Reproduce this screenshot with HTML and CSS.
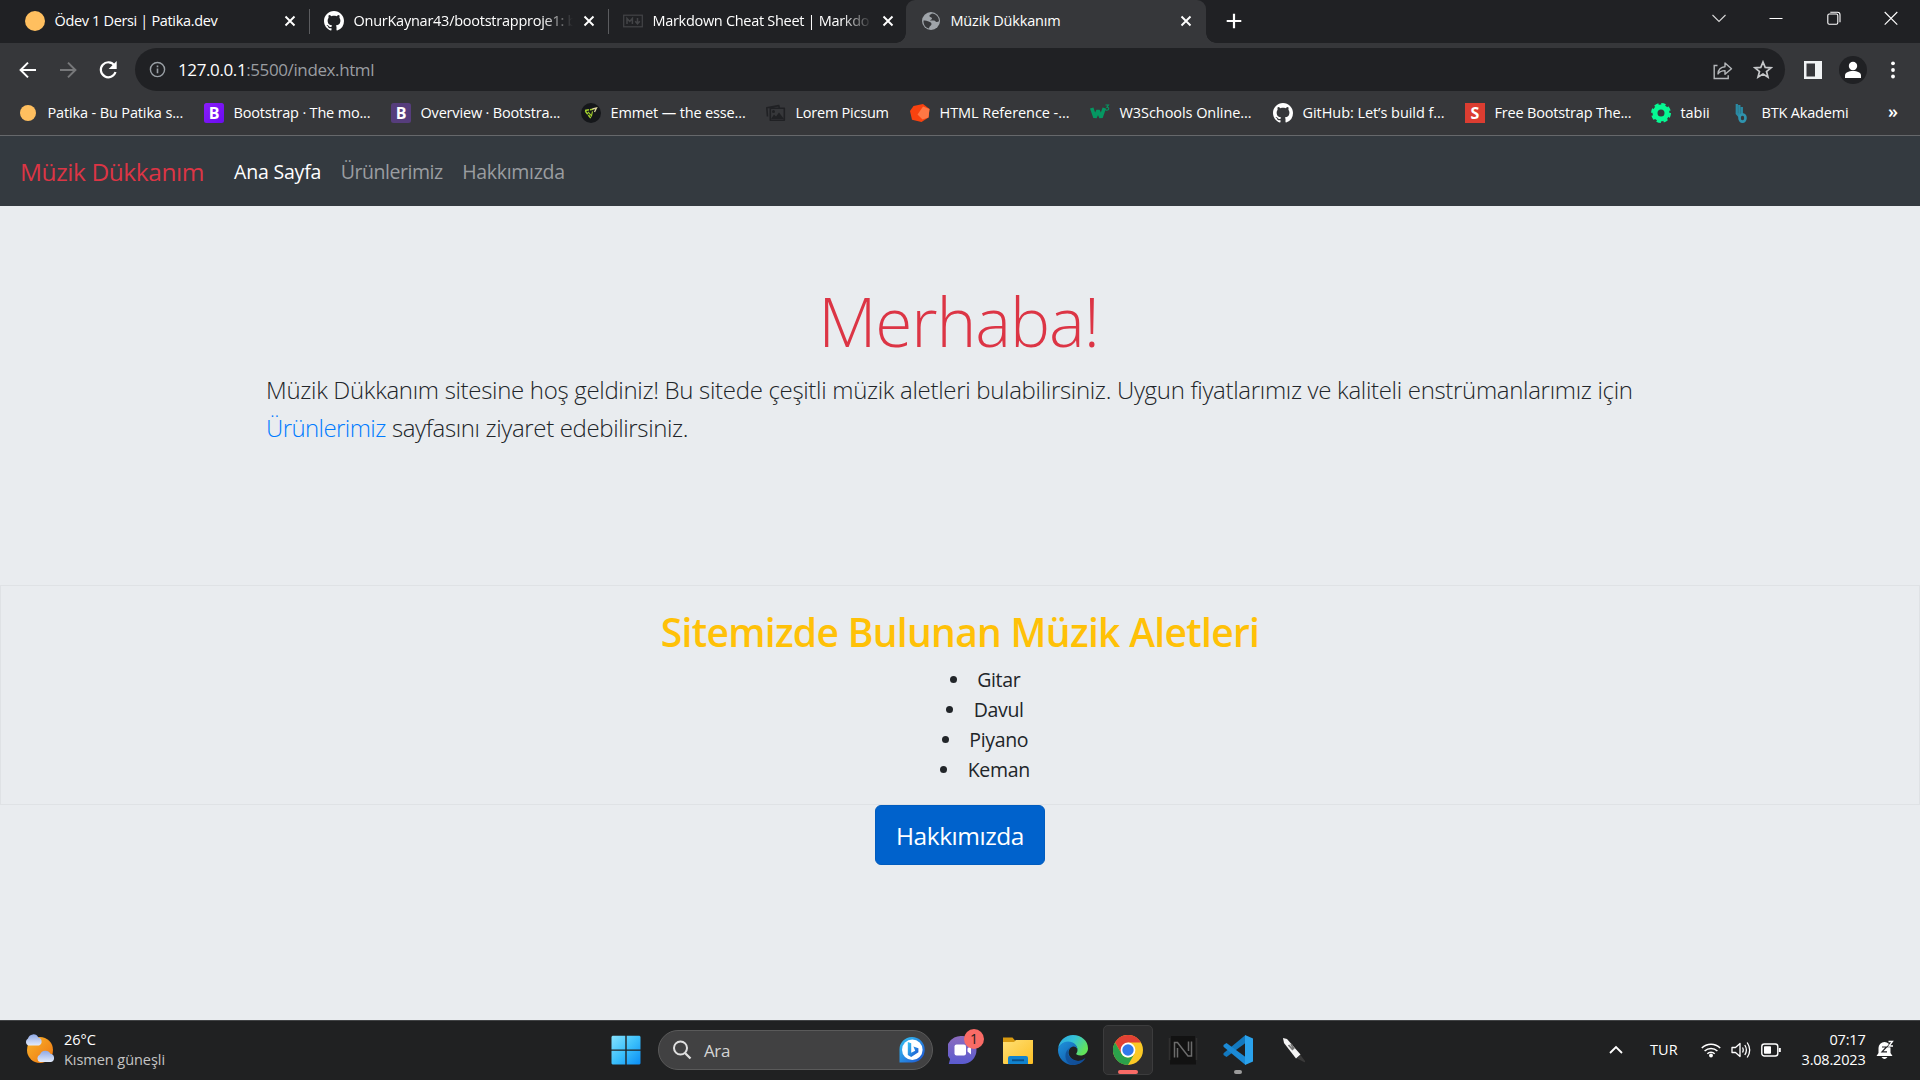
FILE: index.html
```html
<!DOCTYPE html>
<html lang="tr">
<head>
<meta charset="utf-8">
<title>Müzik Dükkanım</title>
<link rel="stylesheet" href="styles.css">
</head>
<body>
<svg width="0" height="0" class="defs">
  <defs>
    <symbol id="github" viewBox="0 0 16 16"><path fill="#fff" d="M8 0C3.58 0 0 3.58 0 8c0 3.54 2.29 6.53 5.47 7.59.4.07.55-.17.55-.38 0-.19-.01-.82-.01-1.49-2.01.37-2.53-.49-2.69-.94-.09-.23-.48-.94-.82-1.13-.28-.15-.68-.52-.01-.53.63-.01 1.08.58 1.23.82.72 1.21 1.87.87 2.33.66.07-.52.28-.87.51-1.07-1.78-.2-3.64-.89-3.64-3.95 0-.87.31-1.59.82-2.15-.08-.2-.36-1.02.08-2.12 0 0 .67-.21 2.2.82.64-.18 1.32-.27 2-.27s1.36.09 2 .27c1.53-1.04 2.2-.82 2.2-.82.44 1.1.16 1.92.08 2.12.51.56.82 1.27.82 2.15 0 3.07-1.87 3.75-3.65 3.95.29.25.54.73.54 1.48 0 1.07-.01 1.93-.01 2.2 0 .21.15.46.55.38A8.01 8.01 0 0 0 16 8c0-4.42-3.58-8-8-8z"/></symbol>
    <symbol id="close" viewBox="0 0 12 12"><path d="M1.500 1.500l9 9M10.500 1.500l-9 9" stroke="#fff" stroke-width="1.900" fill="none"/></symbol>
    <linearGradient id="win" x1="0" y1="0" x2="1" y2="1"><stop offset="0" stop-color="#86e2fd"/><stop offset=".5" stop-color="#3cc0fb"/><stop offset="1" stop-color="#0a8df5"/></linearGradient>
    <linearGradient id="sun" x1="0" y1="0" x2="1" y2="1"><stop offset="0" stop-color="#f9b52c"/><stop offset="1" stop-color="#ee7410"/></linearGradient>
    <linearGradient id="cloud" x1="0" y1="0" x2="0" y2="1"><stop offset="0" stop-color="#8fa9e6"/><stop offset="1" stop-color="#e3ebfb"/></linearGradient>
    <linearGradient id="chat" x1="0" y1="0" x2="0" y2="1"><stop offset="0" stop-color="#8c6bbd"/><stop offset="1" stop-color="#5a5bd0"/></linearGradient>
    <linearGradient id="folder" x1="0" y1="0" x2="1" y2="1"><stop offset="0" stop-color="#ffdf74"/><stop offset="1" stop-color="#fcbf24"/></linearGradient>
    <linearGradient id="edgetop" x1="0" y1="0" x2="1" y2=".5"><stop offset="0" stop-color="#2aa5e0"/><stop offset=".5" stop-color="#35c2d8"/><stop offset="1" stop-color="#62e35a"/></linearGradient>
    <linearGradient id="edgelow" x1="0" y1="0" x2="1" y2="1"><stop offset="0" stop-color="#1f93dc"/><stop offset="1" stop-color="#0d4a9c"/></linearGradient>
    <linearGradient id="bing" x1="0" y1="0" x2="1" y2="1"><stop offset="0" stop-color="#35c3f3"/><stop offset="1" stop-color="#1b50d0"/></linearGradient>
    <linearGradient id="boot" x1="0" y1="0" x2="1" y2="1"><stop offset="0" stop-color="#8a1cfb"/><stop offset="1" stop-color="#6a0cf0"/></linearGradient>
  </defs>
</svg>

<header class="browser">
  <div class="tabstrip">
    <div class="tab tab-patika">
      <svg class="fav" viewBox="0 0 20 20"><circle cx="10" cy="10" r="10" fill="#ffbf5f"/></svg>
      <span class="tab-title">Ödev 1 Dersi | Patika.dev</span>
      <svg class="x"><use href="#close"/></svg>
    </div>
    <div class="tab tab-github">
      <svg class="fav"><use href="#github"/></svg>
      <span class="tab-title fade">OnurKaynar43/bootstrapproje1: b</span>
      <svg class="x"><use href="#close"/></svg>
    </div>
    <div class="tab tab-markdown">
      <svg class="fav" viewBox="0 0 20 20"><rect x=".7" y="4.200" width="18.600" height="11.600" fill="none" stroke="#434447" stroke-width="1.200"/><path d="M4 13V7.500l2.700 3 2.700-3V13M14.500 7v5M12.200 10.300l2.300 2.500 2.300-2.500" fill="none" stroke="#434447" stroke-width="1.500"/></svg>
      <span class="tab-title fade">Markdown Cheat Sheet | Markdo</span>
      <svg class="x"><use href="#close"/></svg>
    </div>
    <div class="tab tab-active">
      <svg class="fav" viewBox="0 0 20 20"><circle cx="10" cy="10" r="9" fill="#9fa4a9"/><path d="M11 2.500c-1.500 1-2.800 1.300-2.500 2.800.3 1.300 2.500.700 2.500 2.200 0 1.300-1.500 1-2 2h4c1.500 0 1.500 2 3 1.500l2-.8c0-4-2.800-7.300-7-7.700zM2.500 9.500c1.500 0 3-.2 4.500.8s3.500.8 3.500 2.700c0 1.600-2 1.700-2.500 4.500-3.700-.9-5.700-4-5.500-8z" fill="#36373a"/></svg>
      <span class="tab-title">Müzik Dükkanım</span>
      <svg class="x"><use href="#close"/></svg>
    </div>
    <svg class="newtab" viewBox="0 0 16 16"><path d="M8 .7v14.600M.7 8h14.600" stroke="#fff" stroke-width="2.200"/></svg>
    <div class="controls">
      <svg viewBox="0 0 16 16"><path d="M1.500 5l6.500 6.500L14.500 5" fill="none" stroke="#d8d8d8" stroke-width="1.100"/></svg>
      <svg viewBox="0 0 16 16"><path d="M1.500 8.500h13" stroke="#fff" stroke-width="1"/></svg>
      <svg viewBox="0 0 16 16"><rect x="1.800" y="4" width="10" height="10.300" rx="1.500" fill="none" stroke="#fff" stroke-width="1.100"/><path d="M4.300 2.200h7.200a2.500 2.500 0 0 1 2.500 2.500v7.500" fill="none" stroke="#fff" stroke-width="1.100"/></svg>
      <svg viewBox="0 0 16 16"><path d="M1.700 2l12.600 12.600M14.300 2L1.700 14.600" stroke="#fff" stroke-width="1.100"/></svg>
    </div>
  </div>

  <div class="toolbar">
    <svg class="nav-ico" viewBox="0 0 20 20"><path d="M18 10H3M10 2.600L2.600 10l7.400 7.400" fill="none" stroke="#fff" stroke-width="2"/></svg>
    <svg class="nav-ico" viewBox="0 0 20 20"><path d="M2 10h15M10 2.600l7.400 7.400-7.400 7.400" fill="none" stroke="#77787a" stroke-width="2"/></svg>
    <svg class="nav-ico" viewBox="0 0 20 20"><path d="M16.500 5.500A7.500 7.500 0 1 0 17.500 12" fill="none" stroke="#fff" stroke-width="2.200"/><path d="M18.700 1v8h-8z" fill="#fff"/></svg>
    <div class="omnibox">
      <svg class="info" viewBox="0 0 18 18"><circle cx="9" cy="9" r="7.500" fill="none" stroke="#9aa0a6" stroke-width="1.500"/><path d="M9 8v5M9 4.800v1.700" stroke="#9aa0a6" stroke-width="1.700"/></svg>
      <span class="url"><b>127.0.0.1</b>:5500/index.html</span>
      <svg class="share" viewBox="0 0 20 20"><path d="M4.500 5.500H1.200v13h14v-3.300" fill="none" stroke="#b4b7ba" stroke-width="1.400"/><path d="M5 14c.3-4.500 3-7 7-7.200V3l6.500 5.700-6.500 5.500v-3.600c-3.300 0-5.500 1-7 3.400z" fill="none" stroke="#b4b7ba" stroke-width="1.400" stroke-linejoin="round"/></svg>
      <svg class="star" viewBox="0 0 20 20"><path d="M10 2l2.200 5.400 5.800.4-4.500 3.700 1.500 5.700-5-3.100-5 3.100 1.500-5.700L2 7.800l5.800-.4z" fill="none" stroke="#c6c8ca" stroke-width="1.700"/></svg>
    </div>
    <svg class="panel" viewBox="0 0 18 18"><rect width="18" height="18" fill="#f1f3f4"/><rect x="2.500" y="2.500" width="8.500" height="13" fill="#36373a"/></svg>
    <svg class="avatar" viewBox="0 0 28 28"><circle cx="14" cy="14" r="14" fill="#202124"/><circle cx="14" cy="10" r="4.200" fill="#fff"/><path d="M6 22v-2.500C6 16.500 9.500 15 14 15s8 1.500 8 4.500V22z" fill="#fff"/></svg>
    <svg class="dots" viewBox="0 0 4 18"><g fill="#fff"><circle cx="2" cy="2.300" r="1.900"/><circle cx="2" cy="9" r="1.900"/><circle cx="2" cy="15.500" r="1.900"/></g></svg>
  </div>

  <nav class="bookmarks">
    <div class="bm"><svg viewBox="0 0 20 20"><circle cx="10" cy="10" r="8" fill="#ffbf5f"/></svg><span class="t1">Patika - Bu Patika s...</span></div>
    <div class="bm"><svg viewBox="0 0 20 20"><rect width="20" height="20" rx="2.500" fill="url(#boot)"/><text x="10" y="15.800" class="glyph">B</text></svg><span class="t2">Bootstrap · The mo...</span></div>
    <div class="bm"><svg viewBox="0 0 20 20"><rect width="20" height="20" rx="2.500" fill="#563d7c"/><text x="10" y="15.800" class="glyph">B</text></svg><span class="t2">Overview · Bootstra...</span></div>
    <div class="bm"><svg viewBox="0 0 20 20"><circle cx="10" cy="10" r="10" fill="#15171a"/><path d="M4 7.500l8-1.300M4.300 8l5.700 7.500" fill="none" stroke="#a4d22e" stroke-width="1.500" stroke-dasharray="4 1"/><path d="M7 8.800l3.500 4 1-4.500" fill="none" stroke="#a4d22e" stroke-width="1.100"/><path d="M11.500 6l4-1-2 4" fill="none" stroke="#ddd59b" stroke-width="1.300"/></svg><span class="t1">Emmet — the esse...</span></div>
    <div class="bm"><svg viewBox="0 0 20 20"><path d="M1.500 13.500L.8 4.800l12-2.200.5 2M4.300 5.300h14v12h-14z" fill="none" stroke="#202124" stroke-width="1.600" stroke-linejoin="round"/><path d="M5 16l3-4.500 2 2 3-4 5 6.500z" fill="#202124"/><circle cx="7.500" cy="8.500" r="1.500" fill="#202124"/></svg><span class="t3">Lorem Picsum</span></div>
    <div class="bm"><svg viewBox="0 0 20 20"><path d="M3.500 3L13 1l6.500 5-1 8.500L11.500 19 2 16.800 0 8z" fill="#f9420f"/><path d="M13 3.500L19.500 6l-1 8.500-6 2-5-5z" fill="#ff7744"/></svg><span class="t4">HTML Reference -...</span></div>
    <div class="bm"><svg viewBox="0 0 20 20"><path d="M1.700 5l3.300 9.500L8 7.500l3 7L14.300 5" fill="none" stroke="#059862" stroke-width="3.600" stroke-linejoin="bevel"/><path d="M15.500 2h3l-1.600 2.200c2.600 0 2.300 3-.2 3q-1 0-1.500-.8" fill="none" stroke="#059862" stroke-width="1.100"/></svg><span class="t4">W3Schools Online...</span></div>
    <div class="bm"><svg><use href="#github"/></svg><span class="t4">GitHub: Let’s build f...</span></div>
    <div class="bm"><svg viewBox="0 0 20 20"><rect width="20" height="20" fill="#dc3d31"/><text x="10" y="15.500" class="glyph">S</text></svg><span class="t2">Free Bootstrap The...</span></div>
    <div class="bm"><svg viewBox="0 0 20 20"><circle cx="10" cy="10" r="6" fill="none" stroke="#06f893" stroke-width="5"/><circle cx="10" cy="10" r="8.900" fill="none" stroke="#06f893" stroke-width="2.200" stroke-dasharray="4.300 2.690"/></svg><span class="t4">tabii</span></div>
    <div class="bm"><svg viewBox="0 0 20 20"><path d="M4.800 1v9.500l3 3.500M7.300 2v10M9.800 4v7" fill="none" stroke="#2b8aa3" stroke-width="2.300"/><ellipse cx="10.500" cy="15" rx="3" ry="3.600" fill="none" stroke="#2f93ae" stroke-width="2.600"/></svg><span class="t2">BTK Akademi</span></div>
    <div class="more">»</div>
  </nav>
</header>

<main class="page">
  <nav class="navbar">
    <a class="brand">Müzik Dükkanım</a>
    <a class="link active">Ana Sayfa</a>
    <a class="link urun">Ürünlerimiz</a>
    <a class="link">Hakkımızda</a>
  </nav>
  <section class="hero">
    <h1>Merhaba!</h1>
    <p class="lead"><span class="l1">Müzik Dükkanım sitesine hoş geldiniz! Bu sitede çeşitli müzik aletleri bulabilirsiniz. Uygun fiyatlarımız ve kaliteli enstrümanlarımız için</span><br><a>Ürünlerimiz</a> <span class="l2">sayfasını ziyaret edebilirsiniz.</span></p>
  </section>
  <section class="card">
    <h2>Sitemizde Bulunan Müzik Aletleri</h2>
    <ul>
      <li>Gitar</li>
      <li>Davul</li>
      <li>Piyano</li>
      <li>Keman</li>
    </ul>
  </section>
  <a class="btn">Hakkımızda</a>
</main>

<footer class="taskbar">
  <div class="weather">
    <svg viewBox="0 0 32 32"><circle cx="16" cy="17" r="13" fill="url(#sun)"/><path d="M4 12.500a4 4 0 0 1 0-7 5.500 5.500 0 0 1 10.300-1A4.200 4.200 0 0 1 15 12.500z" fill="url(#cloud)"/><path d="M16 29a4 4 0 0 1 0-7.500 5.800 5.800 0 0 1 10.500-.7 4.200 4.200 0 0 1 .5 8.200z" fill="url(#cloud)"/></svg>
    <div><div class="temp">26°C</div><div class="cond">Kısmen güneşli</div></div>
  </div>
  <div class="apps">
    <div class="app"><svg viewBox="0 0 30 30"><path fill="url(#win)" d="M1.500.8H14.300v13.700H.5V1.800zM15.700.8h12.800l1 1v12.700H15.700zM.5 15.800h13.800v13.700H1.500l-1-1zM15.700 15.800h13.800v12.700l-1 1H15.700z"/></svg></div>
    <div class="search">
      <svg class="lens" viewBox="0 0 20 20"><circle cx="8.500" cy="8" r="6.500" fill="none" stroke="#e0e0e0" stroke-width="2"/><path d="M13 13l5.500 5.500" stroke="#e0e0e0" stroke-width="2.300"/></svg>
      <span>Ara</span>
      <svg class="bing" viewBox="0 0 26 26"><path d="M13 0a12.500 12.500 0 1 1 0 25.500H.5V13A12.500 12.500 0 0 1 13 0z" fill="url(#bing)"/><circle cx="13.300" cy="12.800" r="10.300" fill="#fff"/><path d="M8.800 5l3.400 1.200v9.500l4-2-1.800-4.200 5 1.800v4L12.200 20l-3.400-2z" fill="url(#bing)"/></svg>
    </div>
    <div class="app"><svg viewBox="0 0 30 30"><path d="M14.500 1a14 14 0 1 1 0 28H.8l1.300-5A14 14 0 0 1 14.500 1z" fill="url(#chat)"/><rect x="6.500" y="9.500" width="11.500" height="11" rx="2" fill="#fff"/><path d="M19.500 13.500l3.500-3v9l-3.500-3z" fill="#fff"/></svg><span class="badge">1</span></div>
    <div class="app"><svg viewBox="0 0 30 30"><path d="M0 2.500h9.500l2.500 3H29v10H0z" fill="#d89a10"/><path d="M0 7h11l2-2h17v23a1 1 0 0 1-1 1H1a1 1 0 0 1-1-1z" fill="url(#folder)"/><path d="M5 29v-6a2 2 0 0 1 2-2h16a2 2 0 0 1 2 2v6z" fill="#1183cf"/><path d="M9 24.300h12v1.900H9z" fill="#0a5088"/></svg></div>
    <div class="app"><svg viewBox="0 0 30 30"><path d="M.2 13.500C1 5.500 7.500 0 15 0c8.500 0 15 6 15 13.200 0 4.600-3.500 7.300-7.500 7.300-3 0-4.600-1-4.300-1.700.6-1 1.300-2 1.300-3.800C19.500 10.500 15 7.500 10 7.500c-5 0-8.500 2.800-9.800 6z" fill="url(#edgetop)"/><path d="M0 15c0-4 4.500-8.500 10-8.500 6 0 9.500 4 9.500 8.500-.5-2.500-3-3.700-5-3.300-3.500 1-5 5.500-3 9.300 2.700 5.300 11 6.800 16 2-3 5-8 7-12.500 7C6.500 30 0 23 0 15z" fill="url(#edgelow)"/><path d="M13.500 12c-3.500 1.500-4.500 5.500-2.500 9 2.700 5.300 11 6.800 16 2-3.500 6.500-10.500 7-12.500 7-5-1-7.500-6-7-10 .3-4 3-7 6-8z" fill="#124b92" opacity=".75"/></svg></div>
    <div class="app open"><svg viewBox="0 0 30 30"><circle cx="15" cy="15" r="15" fill="#fbc926"/><path d="M2 7.500A15 15 0 0 1 28 7.500H15L8.500 18.800z" fill="#e24134"/><path d="M2 7.500A15 15 0 0 0 15 30l6.500-11.300a7.500 7.500 0 0 1-13 0z" fill="#2ba14b"/><circle cx="15" cy="15" r="7.400" fill="#fff"/><circle cx="15" cy="15" r="5.700" fill="#3179ea"/></svg><i class="run"></i></div>
    <div class="app"><svg viewBox="0 0 30 30"><path d="M3 1h24l1 28.500H2z" fill="#121212"/><path d="M1.500 3v22M28.500 3v22" stroke="#303030" stroke-width="1.500"/><path d="M6.500 22.500V7.500h3L20 21h3.500V6.500M9.500 22.500V13M20.500 6.500v9.500" fill="none" stroke="#6c6c6c" stroke-width="1.500"/></svg></div>
    <div class="app"><svg viewBox="0 0 30 30"><path d="M22.500 0v8L3.500 22 .5 20v-1.800z" fill="#1379bf"/><path d="M22.500 30v-8L3.500 8l-3 2v1.800z" fill="#1b8ad6"/><path d="M22 0l8 3.500v23L22 30z" fill="#2aa2ec"/></svg><i class="run idle"></i></div>
    <div class="app"><svg viewBox="0 0 30 30"><path d="M5 3l4 1 13.500 15.500-4.500 4L6 8z" fill="#f4f4f4"/><path d="M22.500 20l4.500 6c.5 1-.3 1.500-1 1l-7-3.500z" fill="#3a3a3a"/><path d="M10.500 10l4.500 5M13 9l3 5" stroke="#777" stroke-width="1.800"/></svg></div>
  </div>
  <div class="tray">
    <svg class="up" viewBox="0 0 14 14"><path d="M1 10l6-6 6 6" fill="none" stroke="#fff" stroke-width="1.800"/></svg>
    <span class="lang">TUR</span>
    <svg class="sys" viewBox="0 0 20 20"><g fill="none" stroke="#fff" stroke-width="1.500"><path d="M.8 8a13 13 0 0 1 18.400 0M3.600 11a9.200 9.200 0 0 1 12.800 0M6.300 13.800a5.300 5.300 0 0 1 7.400 0"/></g><circle cx="10" cy="15.500" r="1.900" fill="#fff"/></svg>
    <svg class="sys" viewBox="0 0 20 20"><g fill="none" stroke="#fff" stroke-width="1.300"><path d="M1 7.500h3.500L9 3.500v13l-4.500-4H1z" stroke-linejoin="round"/><path d="M11.500 7.500q1.500 2.500 0 5M13.800 5q3.200 5 0 10M16.200 2.500q5 7.500 0 15"/></g></svg>
    <svg class="sys" viewBox="0 0 20 20"><rect x=".8" y="4" width="16" height="12" rx="2.500" fill="none" stroke="#fff" stroke-width="1.400"/><rect x="3" y="6.200" width="7" height="7.600" rx=".8" fill="#fff"/><path d="M18.800 8v4" stroke="#fff" stroke-width="2"/></svg>
    <div class="clock"><div class="hour">07:17</div><div>3.08.2023</div></div>
    <svg class="bell" viewBox="0 0 18 20"><path d="M2.500 8a6 6 0 0 1 12 0v5l2 3H.5l2-3zM5.500 17h6q-3 4-6 0z" fill="#fff"/><path d="M6 7h4.500L6 11.800h5" fill="none" stroke="#202124" stroke-width="1.200"/><path d="M12.500 1.500h4L13 6h4" fill="none" stroke="#202124" stroke-width="2.600"/><path d="M12.500 1.500h4L13 6h4" fill="none" stroke="#fff" stroke-width="1.300"/></svg>
  </div>
</footer>
</body>
</html>
```
FILE: styles.css
```css
* { box-sizing: border-box; }
body {
  margin: 0;
  width: 1920px;
  height: 1080px;
  overflow: hidden;
  display: flex;
  flex-direction: column;
  font-family: "Open Sans", "Noto Sans", sans-serif;
  font-size: 14.5px;
  color: #fff;
  background: #e9ecef;
}
svg { display: block; flex: none; }
.defs { position: absolute; }

/* browser chrome */
.browser { height: 136px; background: #36373a; border-bottom: 1px solid #66686b; }
.tabstrip { display: flex; height: 43px; background: #202124; }
.tab { display: flex; align-items: center; height: 43px; padding-bottom: 1px; letter-spacing: -.3px; }
.fav { width: 20px; height: 20px; margin-right: 9.500px; }
.tab-title { flex: 1; min-width: 0; white-space: nowrap; line-height: 20px; }
.fade { -webkit-mask-image: linear-gradient(90deg, #000 86%, transparent); mask-image: linear-gradient(90deg, #000 86%, transparent); }
.x { width: 12px; height: 12px; margin-left: 10px; }
.tab-patika { width: 309px; padding-left: 25px; padding-right: 13px; letter-spacing: -.34px; }
.tab-github, .tab-markdown { background: linear-gradient(#5b5c5f, #5b5c5f) 0 9px / 1px 25px no-repeat; }
.tab-github { width: 299px; padding-left: 15px; padding-right: 13px; letter-spacing: -.25px; }
.tab-markdown { width: 298px; padding-left: 15px; padding-right: 12.500px; }
.tab-active { position: relative; width: 300px; padding: 0 14px 1px 15px; background: #36373a; border-radius: 9px 9px 0 0; letter-spacing: -.18px; }
.tab-active::before, .tab-active::after { content: ""; position: absolute; bottom: 0; width: 10px; height: 10px; }
.tab-active::before { left: -10px; background: radial-gradient(circle at 0 0, #202124 9.5px, #36373a 10px); }
.tab-active::after { right: -10px; background: radial-gradient(circle at 100% 0, #202124 9.5px, #36373a 10px); }
.newtab { width: 16px; height: 16px; margin: 13px 0 0 19.500px; }
.controls { display: flex; gap: 41.300px; margin: 10px 0 0 auto; padding-right: 21px; }
.controls svg { width: 16px; height: 16px; }

.toolbar { display: flex; align-items: center; height: 53px; padding: 0 0 0 18px; }
.nav-ico { width: 20px; height: 20px; margin-right: 20px; }
.omnibox { display: flex; align-items: center; width: 1650px; height: 43px; margin-left: -3px; padding: 0 12.500px 0 14px; border-radius: 22px; background: #202124; }
.info { width: 17px; height: 17px; }
.url { flex: 1; margin-left: 12px; font-size: 17px; letter-spacing: -.39px; color: #9a9da1; }
.url b { font-weight: 400; color: #fff; }
.share { width: 20px; height: 20px; margin-right: 20px; }
.star { width: 20px; height: 20px; }
.panel { width: 18px; height: 18px; margin-left: 18.500px; }
.avatar { width: 28px; height: 28px; margin-left: 17.500px; }
.dots { width: 4px; height: 18px; margin-left: 23.500px; }

.bookmarks { display: grid; grid-template-columns: 186px 187px 190px 185px 144px 180px 183px 192px 186px 81px 156px 1fr; height: 39px; padding: 0 0 6px 18px; align-items: center; }
.bm { display: flex; align-items: center; gap: 9.500px; white-space: nowrap; line-height: 20px; }
.bm svg { width: 20px; height: 20px; }
.glyph { font: 700 16px "Open Sans", sans-serif; fill: #fff; text-anchor: middle; }
.t1 { letter-spacing: -.14px; }
.t2 { letter-spacing: -.18px; }
.t3 { letter-spacing: -.24px; }
.t4 { letter-spacing: -.06px; }
.more { font-size: 18px; line-height: 20px; font-weight: 600; padding-bottom: 3px; }

/* web page */
.page { flex: 1; display: flex; flex-direction: column; align-items: center; color: #212529; }
.navbar { display: flex; align-items: center; align-self: stretch; height: 70px; padding-left: 20px; background: #343a40; }
.brand { width: 214px; font-size: 24.500px; letter-spacing: -.43px; color: #dc3545; }
.link { margin-right: 19.500px; font-size: 19.500px; letter-spacing: -.3px; color: #9a9da0; padding-top: 1px; }
.link.active { letter-spacing: -.19px; color: #fff; }
.link.urun { letter-spacing: -.45px; }
.hero { width: 1388px; height: 379px; padding-top: 73px; }
h1 { margin: 0; padding-right: 3px; font-size: 67.500px; line-height: 84px; font-weight: 300; letter-spacing: -1.100px; text-align: center; color: #dc3545; }
.lead { margin: 8px 0 0; font-size: 24px; line-height: 37.500px; font-weight: 300; white-space: nowrap; }
.l1 { letter-spacing: -.312px; }
.lead a { letter-spacing: -.58px; color: #007bff; }
.l2 { letter-spacing: -.36px; }
.card { align-self: stretch; height: 220px; padding-top: 21px; border: 1px solid #dfe2e5; text-align: center; }
h2 { margin: 0; font-size: 39px; line-height: 49px; font-weight: 600; letter-spacing: -.69px; color: #ffc107; }
ul { margin: 9px 0 0; padding: 0 0 0 50px; list-style-position: inside; font-size: 19.500px; line-height: 30px; letter-spacing: -.34px; }
.btn { width: 170px; height: 60px; border: 1px solid #005cbf; border-radius: 6px; background: #0062cc; color: #fff; font-size: 24.500px; line-height: 59px; letter-spacing: -.45px; text-align: center; }

/* taskbar */
.taskbar { display: flex; align-items: center; height: 60px; padding-bottom: 1px; background: #202122; border-top: 1px solid #414345; }
.weather { display: flex; align-items: center; width: 601px; padding-left: 24px; gap: 8px; line-height: 20px; }
.weather svg { width: 32px; height: 32px; margin-bottom: 3px; }
.weather > div { padding-bottom: 1px; }
.cond { letter-spacing: -.05px; color: #c4c4c4; }
.apps { display: flex; align-items: center; gap: 5px; height: 50px; }
.app { position: relative; display: flex; align-items: center; justify-content: center; width: 50px; height: 50px; }
.app svg { width: 30px; height: 30px; }
.search { display: flex; align-items: center; width: 275px; height: 40px; margin-left: 2px; padding: 0 7px 0 13px; border: 1px solid #5a5a5a; border-radius: 20px; background: #414142; color: #d4d4d4; font-size: 17px; letter-spacing: -.38px; }
.lens { width: 20px; height: 20px; margin-right: 12px; }
.search span { flex: 1; padding-top: 1px; }
.bing { width: 26px; height: 26px; }
.badge { position: absolute; left: 26px; top: 4px; width: 20px; height: 20px; border-radius: 50%; background: #f96b66; color: #1c1c1c; font-size: 14px; line-height: 20px; text-align: center; }
.open { border: 1px solid #3c3c3d; border-radius: 5px; background: #2d2d2e; }
.run { position: absolute; left: 50%; bottom: 0; width: 20px; height: 4px; margin-left: -10px; border-radius: 2px; background: #f96b66; }
.run.idle { width: 8px; margin-left: -4px; bottom: 1px; background: #9b9b9b; }
.tray { display: flex; align-items: center; margin-left: auto; padding-right: 26px; line-height: 20px; }
.up { width: 14px; height: 14px; margin-right: 27px; }
.lang { width: 51px; letter-spacing: .1px; }
.sys { width: 20px; height: 20px; margin-right: 10px; }
.clock { width: 74.500px; padding-bottom: 1px; text-align: right; letter-spacing: -.19px; }
.bell { width: 18px; height: 20px; margin-left: 10.500px; }
```
